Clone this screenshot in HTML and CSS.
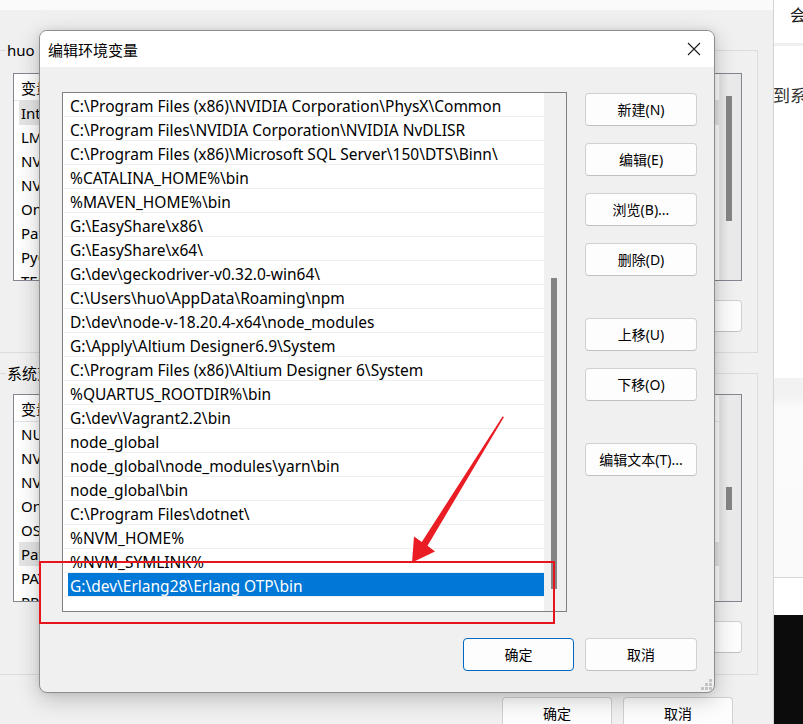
FILE: index.html
```html
<!DOCTYPE html>
<html lang="zh-CN">
<head>
<meta charset="utf-8">
<title>编辑环境变量</title>
<link rel="stylesheet" href="styles.css">
</head>
<body>
<div class="backwin">
  <div class="topstrip"></div>
  <div class="group group1">
    <div class="legend">huo 的用户变量(U)</div>
    <div class="blist">
      <div class="brows">
        <div class="bhead"><span class="bc1">变量</span></div>
        <div class="brow hl"><span class="bc1">IntelliJ IDEA</span></div>
        <div class="brow"><span class="bc1">LM_LICENSE_FILE</span></div>
        <div class="brow"><span class="bc1">NVM_HOME</span></div>
        <div class="brow"><span class="bc1">NVM_SYMLINK</span></div>
        <div class="brow"><span class="bc1">OneDrive</span></div>
        <div class="brow"><span class="bc1">Path</span></div>
        <div class="brow"><span class="bc1">PyCharm</span></div>
        <div class="brow"><span class="bc1">TEMP</span></div>
      </div>
      <div class="bscroll"><div class="bthumb t1"></div></div>
    </div>
    <div class="bbtns">
      <div class="bbtn">新建(N)...</div>
      <div class="bbtn">编辑(E)...</div>
      <div class="bbtn">删除(D)</div>
    </div>
  </div>
  <div class="group group2">
    <div class="legend">系统变量(S)</div>
    <div class="blist">
      <div class="brows">
        <div class="bhead"><span class="bc1">变量</span></div>
        <div class="brow"><span class="bc1">NUMBER_OF_PROCESSORS</span></div>
        <div class="brow"><span class="bc1">NVCUDASAMPLES_ROOT</span></div>
        <div class="brow"><span class="bc1">NVTOOLSEXT_PATH</span></div>
        <div class="brow"><span class="bc1">OnlineServices</span></div>
        <div class="brow"><span class="bc1">OS</span></div>
        <div class="brow hl"><span class="bc1">Path</span></div>
        <div class="brow"><span class="bc1">PATHEXT</span></div>
        <div class="brow"><span class="bc1">PROCESSOR_ARCHITECTURE</span></div>
      </div>
      <div class="bscroll"><div class="bthumb t2"></div></div>
    </div>
    <div class="bbtns">
      <div class="bbtn">新建(W)...</div>
      <div class="bbtn">编辑(I)...</div>
      <div class="bbtn">删除(L)</div>
    </div>
  </div>
  <div class="bfoot">
    <div class="bbtn wide">确定</div>
    <div class="bbtn wide">取消</div>
  </div>
</div>

<div class="rightwin">
  <div class="rw-head">会</div>
  <div class="rw-text">到系</div>
  <div class="rw-panel"></div>
  <div class="rw-low"></div>
  <div class="rw-black"></div>
</div>

<div class="dialog">
  <div class="titlebar">
    <span class="title">编辑环境变量</span>
    <svg class="close" width="14" height="14" viewBox="0 0 14 14"><path d="M1 1 L13 13 M13 1 L1 13" stroke="#1b1b1b" stroke-width="1.1" fill="none"/></svg>
  </div>
  <div class="dlg-body">
    <div class="main">
      <div class="listbox">
        <div class="rows">
          <div class="row"><span class="rt">C:\Program Files (x86)\NVIDIA Corporation\PhysX\Common</span></div>
          <div class="row"><span class="rt">C:\Program Files\NVIDIA Corporation\NVIDIA NvDLISR</span></div>
          <div class="row"><span class="rt">C:\Program Files (x86)\Microsoft SQL Server\150\DTS\Binn\</span></div>
          <div class="row"><span class="rt">%CATALINA_HOME%\bin</span></div>
          <div class="row"><span class="rt">%MAVEN_HOME%\bin</span></div>
          <div class="row"><span class="rt">G:\EasyShare\x86\</span></div>
          <div class="row"><span class="rt">G:\EasyShare\x64\</span></div>
          <div class="row"><span class="rt">G:\dev\geckodriver-v0.32.0-win64\</span></div>
          <div class="row"><span class="rt">C:\Users\huo\AppData\Roaming\npm</span></div>
          <div class="row"><span class="rt">D:\dev\node-v-18.20.4-x64\node_modules</span></div>
          <div class="row"><span class="rt">G:\Apply\Altium Designer6.9\System</span></div>
          <div class="row"><span class="rt">C:\Program Files (x86)\Altium Designer 6\System</span></div>
          <div class="row"><span class="rt">%QUARTUS_ROOTDIR%\bin</span></div>
          <div class="row"><span class="rt">G:\dev\Vagrant2.2\bin</span></div>
          <div class="row"><span class="rt">node_global</span></div>
          <div class="row"><span class="rt">node_global\node_modules\yarn\bin</span></div>
          <div class="row"><span class="rt">node_global\bin</span></div>
          <div class="row"><span class="rt">C:\Program Files\dotnet\</span></div>
          <div class="row"><span class="rt">%NVM_HOME%</span></div>
          <div class="row"><span class="rt">%NVM_SYMLINK%</span></div>
          <div class="row sel"><span class="rt">G:\dev\Erlang28\Erlang OTP\bin</span></div>
        </div>
        <div class="vscroll"><div class="thumb"></div></div>
      </div>
      <div class="btncol">
        <div class="btngroup">
          <div class="btn">新建(N)</div>
          <div class="btn">编辑(E)</div>
          <div class="btn">浏览(B)...</div>
          <div class="btn">删除(D)</div>
        </div>
        <div class="btngroup">
          <div class="btn">上移(U)</div>
          <div class="btn">下移(O)</div>
        </div>
        <div class="btngroup">
          <div class="btn">编辑文本(T)...</div>
        </div>
      </div>
    </div>
    <div class="footer">
      <div class="btn default">确定</div>
      <div class="btn">取消</div>
    </div>
  </div>
  <svg class="grip" width="13" height="13" viewBox="0 0 13 13">
    <rect x="9" y="1" width="3" height="3" fill="#c4c4c4"/>
    <rect x="5" y="5" width="3" height="3" fill="#c4c4c4"/>
    <rect x="9" y="5" width="3" height="3" fill="#c4c4c4"/>
    <rect x="1" y="9" width="3" height="3" fill="#c4c4c4"/>
    <rect x="5" y="9" width="3" height="3" fill="#c4c4c4"/>
    <rect x="9" y="9" width="3" height="3" fill="#c4c4c4"/>
  </svg>
</div>

<svg class="annot" width="803" height="724" viewBox="0 0 803 724">
  <rect x="40" y="562" width="514" height="61" fill="none" stroke="#e8141c" stroke-width="2"/>
  <polygon points="504,417 427.5,545.8 435,551.5 412,562.5 414,536.5 421.8,542 502.5,416.5" fill="#ea1c24"/>
</svg>
</body>
</html>
```
FILE: styles.css
```css
* { box-sizing: border-box; }
html, body { margin: 0; padding: 0; }
body {
  width: 803px;
  height: 724px;
  overflow: hidden;
  position: relative;
  background: #f0f0f0;
  font-family: "Noto Sans", "Noto Sans CJK SC", sans-serif;
  color: #000;
}

/* ---------- background window ---------- */
.backwin {
  position: absolute;
  left: 0;
  top: 0;
  width: 774px;
  height: 724px;
  background: #f0f0f0;
  border-right: 1px solid #d4d4d4;
}
.topstrip { height: 10px; background: #fafafa; }
.group {
  margin-left: -5px;
  width: 763px;
  border: 1px solid #dcdcdc;
}
.group1 { margin-top: 40px; height: 303px; }
.group2 { margin-top: 20px; height: 302px; }
.legend {
  display: block;
  width: max-content;
  margin: -11px 0 0 10px;
  padding: 0 1px;
  height: 20px;
  line-height: 20px;
  font-size: 15px;
  background: #f0f0f0;
}
.blist {
  margin: 13px 0 0 17px;
  width: 729px;
  height: 208px;
  border: 1px solid #828790;
  background: #fff;
  display: flex;
  overflow: hidden;
}
.group2 .blist { margin-top: 11px; }
.brows { flex: 1; overflow: hidden; }
.bhead {
  height: 27px;
  line-height: 28px;
  padding-left: 7px;
  font-size: 15px;
  border-bottom: 1px solid #e5e5e5;
  display: flex;
}
.bc1 { width: 240px; white-space: nowrap; }
.brow {
  height: 24px;
  line-height: 25px;
  margin-left: 5px;
  padding-left: 2px;
  font-size: 15px;
  white-space: nowrap;
}
.brow.hl { background: #e5e5e5; }
.bscroll {
  width: 22px;
  background: linear-gradient(90deg, #e4e4e4, #efefef 40%, #e6e6e6);
  border-left: 1px solid #e8e8e8;
}
.bthumb { margin-left: 6px; width: 6px; background: #858585; }
.t1 { margin-top: 22px; height: 125px; }
.t2 { margin-top: 92px; height: 23px; }
.bbtns {
  display: flex;
  justify-content: flex-end;
  gap: 10px;
  margin: 19px 15px 0 0;
}
.bbtn {
  width: 120px;
  height: 32px;
  line-height: 30px;
  text-align: center;
  font-size: 14px;
  background: #fdfdfd;
  border: 1px solid #d0d0d0;
  border-bottom-color: #c2c2c2;
  border-radius: 4px;
}
.bfoot {
  display: flex;
  justify-content: flex-end;
  gap: 11px;
  margin: 22px 40px 0 0;
}
.bbtn.wide { width: 110px; line-height: 31px; }

/* ---------- right window ---------- */
.rightwin {
  position: absolute;
  left: 774px;
  top: 0;
  width: 29px;
  height: 724px;
  background: #fff;
  display: flex;
  flex-direction: column;
}
.rw-head {
  height: 46px;
  padding: 4px 0 0 16px;
  font-size: 16px;
  line-height: 22px;
  border-bottom: 3px solid #efefef;
  color: #1a1a1a;
}
.rw-text {
  margin-top: 38px;
  font-size: 17px;
  line-height: 24px;
  color: #333;
  white-space: nowrap;
  margin-left: -1px;
}
.rw-panel {
  margin-top: 270px;
  height: 199px;
  background: linear-gradient(180deg, #f2f2f2 0, #f2f2f2 18px, #fbfbfb 30px, #fafafa);
}
.rw-low { flex: 1; border-top: 1px solid #d6d6d6; background: #fff; }
.rw-black { height: 109px; background: #0c0c0c; }

/* ---------- dialog ---------- */
.dialog {
  position: absolute;
  left: 39px;
  top: 30px;
  width: 676px;
  height: 663px;
  background: #f0f0f0;
  border: 1px solid #8d8d8d;
  border-radius: 8px;
  overflow: hidden;
  box-shadow: 0 6px 22px rgba(0, 0, 0, 0.22), 0 0 6px rgba(0, 0, 0, 0.08);
}
.titlebar {
  height: 36px;
  background: #fff;
  display: flex;
  align-items: center;
  padding-left: 8px;
}
.title { font-size: 15px; color: #000; }
.close { margin-left: auto; margin-right: 13px; }
.dlg-body { padding: 25px 17px 0 22px; }
.main { display: flex; gap: 18px; }
.listbox {
  width: 505px;
  height: 520px;
  border: 1px solid #7f7f7f;
  background: #fff;
  display: flex;
}
.rows { width: 481px; }
.row {
  height: 24px;
  margin-left: 1px;
  border-bottom: 1px solid #efefef;
}
.rt {
  display: block;
  margin-left: 4px;
  padding: 2px 0 0 2px;
  height: 23px;
  line-height: 23px;
  font-size: 15.5px;
  white-space: nowrap;
  color: #000;
}
.row.sel .rt { background: #0078d7; color: #fff; }
.vscroll { width: 22px; background: #f0f0f0; }
.thumb {
  margin: 185px 0 0 7px;
  width: 6px;
  height: 311px;
  background: #858585;
}
.btncol {
  width: 112px;
  padding-top: 1px;
  display: flex;
  flex-direction: column;
  gap: 42px;
}
.btngroup { display: flex; flex-direction: column; gap: 17px; }
.btn {
  height: 33px;
  line-height: 31px;
  text-align: center;
  font-size: 14px;
  color: #000;
  background: #fdfdfd;
  border: 1px solid #d1d1d1;
  border-bottom-color: #c0c0c0;
  border-radius: 4px;
  white-space: nowrap;
}
.footer {
  display: flex;
  justify-content: flex-end;
  gap: 11px;
  margin-top: 26px;
}
.footer .btn { width: 112px; }
.footer .btn.default { width: 111px; border: 1px solid #0067c0; }
.grip { position: absolute; right: 1px; bottom: 1px; }

/* ---------- annotation ---------- */
.annot { position: absolute; left: 0; top: 0; pointer-events: none; }
```
